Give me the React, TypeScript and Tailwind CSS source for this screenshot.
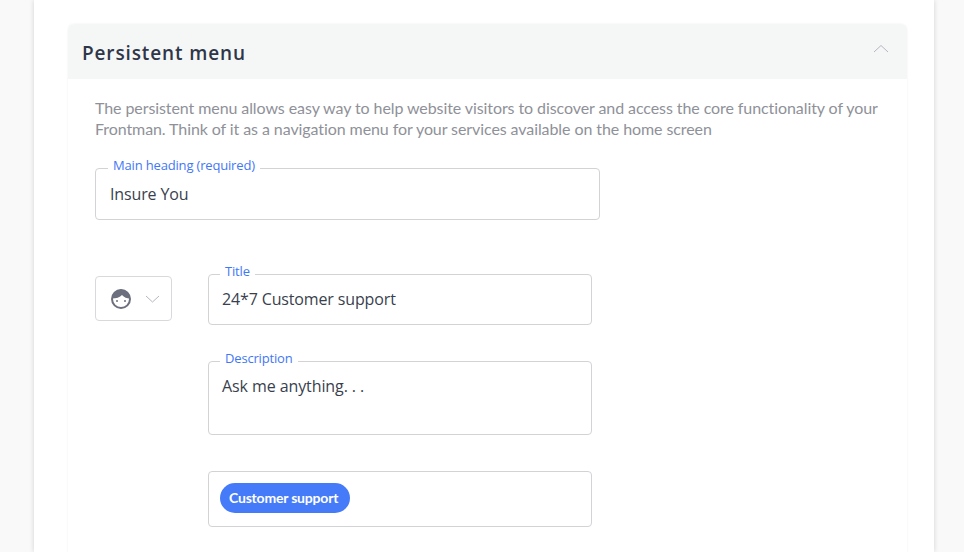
function Field({ label, labelLeft, className, children }: { label: string; labelLeft: string; className: string; children: React.ReactNode }) {
  return (
    <div className={`relative rounded border border-[#d3d3d6] bg-white ${className}`}>
      <span className={`absolute -top-[14px] bg-white px-[5px] font-['Open_Sans',sans-serif] text-[13px] leading-[20px] tracking-[-0.17px] text-[#3f78f6] ${labelLeft}`}>
        {label}
      </span>
      {children}
    </div>
  );
}

export default function App() {
  return (
    <div className="h-[552px] overflow-hidden bg-[#f9f9f9] pl-[34px] pr-[30px]">
      <div className="h-full bg-white px-[34px] pt-[24px] pr-[27px] shadow-[0_0_5px_rgba(0,0,0,0.16)]">
        {/* Accordion */}
        <div className="h-[600px] rounded-t-md bg-white shadow-[0_0_2px_rgba(0,0,0,0.08)]">
          <div className="flex h-[55px] items-center justify-between rounded-t-md bg-[#f5f7f7] pl-[14px] pr-[18px]">
            <h2 className="pt-[3px] font-['Open_Sans',sans-serif] text-[19px] font-semibold tracking-[0.87px] text-[#2f3648]">
              Persistent menu
            </h2>
            <svg width="16" height="9" viewBox="0 0 16 9" fill="none" stroke="#b4b7bf" strokeWidth="1" className="mb-[7px]">
              <path d="M1 8L8 1.5L15 8" />
            </svg>
          </div>

          <div className="pl-[27px] pt-[18px]">
            <p className="w-[800px] font-['Lato',sans-serif] text-[16px] leading-[21px] tracking-[-0.085px] text-[#8f9199]">
              The persistent menu allows easy way to help website visitors to discover and access the core functionality of your Frontman. Think of it as a navigation menu for your services available on the home screen
            </p>

            <Field label="Main heading (required)" labelLeft="left-[12px]" className="mt-[29px] flex h-[52px] w-[505px] items-center pl-[14px]">
              <span className="pb-[1px] font-['Open_Sans',sans-serif] text-[16px] tracking-[-0.14px] text-[#3a3f4e]">Insure You</span>
            </Field>

            <div className="mt-[54px] flex items-start gap-[36px]">
              <div className="mt-[2px] flex h-[45px] w-[77px] items-center gap-[14px] rounded border border-[#d9d9dc] pl-[15px]">
                <svg width="20" height="20" viewBox="0 0 20 20">
                  <circle cx="10" cy="10" r="9" fill="white" stroke="#6c6f7d" strokeWidth="2" />
                  <path d="M1 9.5A9 9 0 0 1 19 9.5C16 9.5 13 8.5 11 6C9 8.5 5 9.5 1 9.5Z" fill="#6c6f7d" />
                  <circle cx="6" cy="12" r="1" fill="#6c6f7d" />
                  <circle cx="14" cy="12" r="1" fill="#6c6f7d" />
                </svg>
                <svg width="15" height="8" viewBox="0 0 15 8" fill="none" stroke="#b4b7bf" strokeWidth="1">
                  <path d="M1 1L7.5 7L14 1" />
                </svg>
              </div>

              <div className="flex w-[384px] flex-col">
                <Field label="Title" labelLeft="left-[11px]" className="flex h-[51px] items-center pl-[13px]">
                  <span className="pb-[2px] font-['Open_Sans',sans-serif] text-[16px] tracking-[-0.14px] text-[#3a3f4e]">24*7 Customer support</span>
                </Field>
                <Field label="Description" labelLeft="left-[11px]" className="mt-[36px] h-[74px] pl-[13px] pt-[11px]">
                  <span className="block font-['Open_Sans',sans-serif] text-[16px] leading-[26px] tracking-[-0.09px] text-[#3a3f4e]">Ask me anything. . .</span>
                </Field>
                <div className="mt-[36px] flex h-[56px] items-start rounded border border-[#d3d3d6] pl-[11px] pt-[11px]">
                  <span className="flex h-[30px] items-center rounded-full bg-[#457bf8] pb-[1px] pl-[9px] pr-[12px] font-['Lato',sans-serif] text-[14px] font-bold tracking-[-0.2px] text-white">
                    Customer support
                  </span>
                </div>
              </div>
            </div>
          </div>
        </div>
      </div>
    </div>
  );
}
